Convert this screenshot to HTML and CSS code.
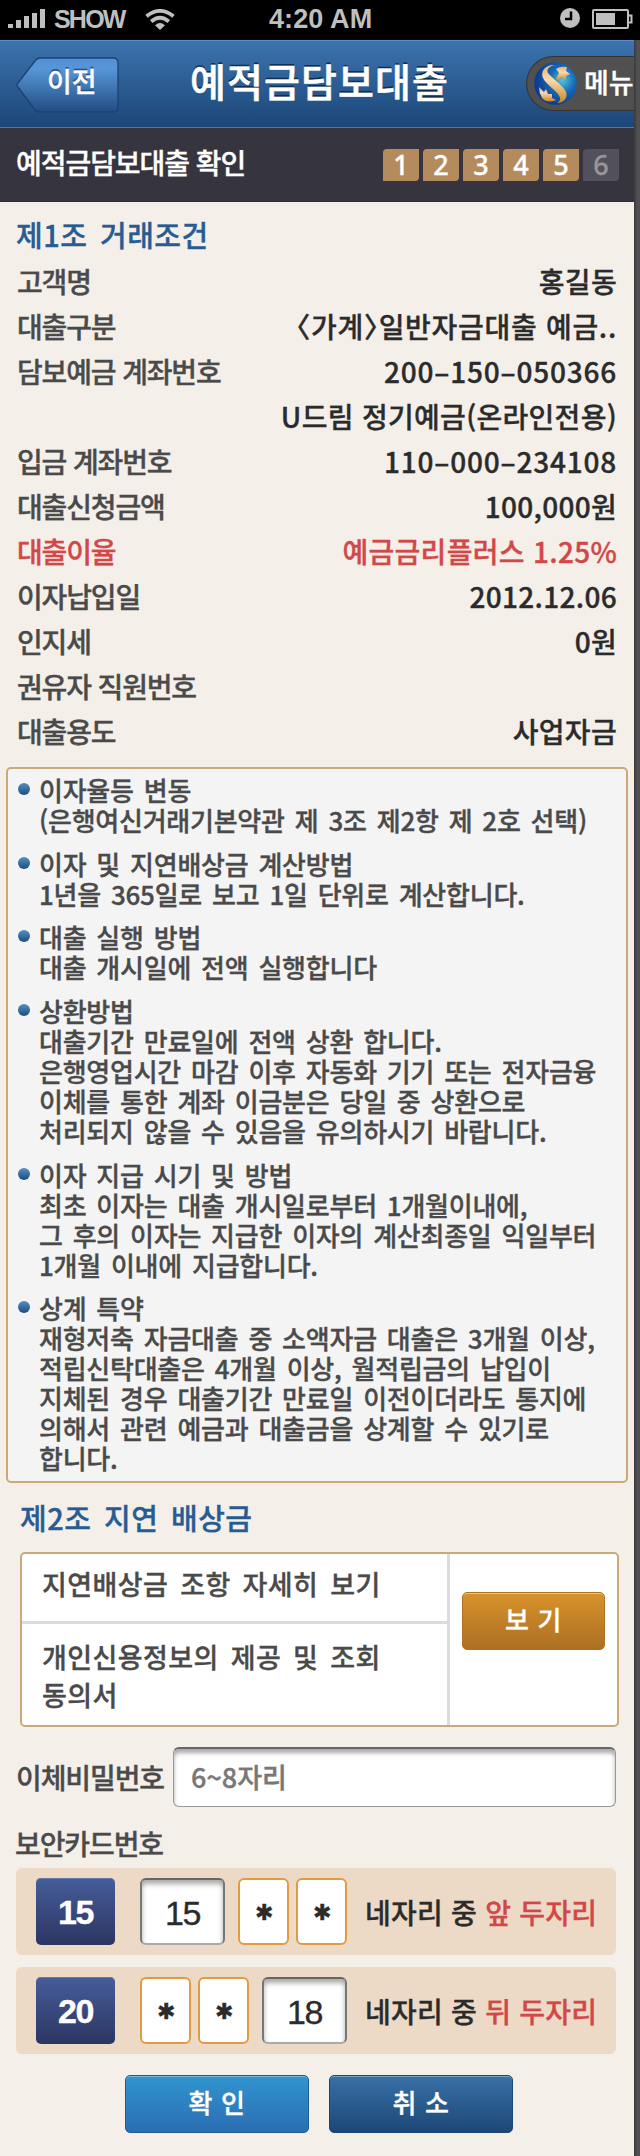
FILE: index.html
```html
<!DOCTYPE html>
<html lang="ko">
<head>
<meta charset="utf-8">
<title>예적금담보대출</title>
<link rel="stylesheet" href="styles.css">
</head>
<body>
<div class="status">
  <svg class="signal" width="38" height="20" viewBox="0 0 38 20"><path d="M0 15h5v4H0zM8 11h5v8H8zM16 7h5v12h-5zM24 4h5v15h-5zM32 0h5v19h-5z" fill="#bfbfbf"/></svg>
  <span class="carrier">SHOW</span>
  <svg class="wifi" width="30" height="21" viewBox="0 0 30 21"><g fill="none" stroke="#bfbfbf" stroke-width="3.8"><path d="M1.500 7.300Q15-3.500 28.500 7.300"/><path d="M6.200 12.500Q15 5 23.800 12.500"/></g><path d="M10 16.200Q15 12 20 16.200L15 21z" fill="#bfbfbf"/></svg>
  <span class="time">4:20 AM</span>
  <svg class="clock" width="20" height="20" viewBox="0 0 20 20"><circle cx="10" cy="10" r="10" fill="#bfbfbf"/><path d="M11 3.500v7.500H5" fill="none" stroke="#000" stroke-width="2.500"/></svg>
  <svg class="battery" width="41" height="20" viewBox="0 0 41 20"><rect x="1" y="1" width="35" height="18" rx="1" fill="none" stroke="#bfbfbf" stroke-width="2"/><path d="M4 4h19v12H4z" fill="#bfbfbf"/><path d="M37 6.500h2.500v7H37" fill="none" stroke="#bfbfbf" stroke-width="2"/></svg>
</div>
<div class="screen">
<div class="page">
  <header class="header">
    <a class="back">
      <svg class="back-shape" width="104" height="56" viewBox="0 0 104 56"><defs><linearGradient id="bg" x1="0" y1="0" x2="0" y2="1"><stop offset="0" stop-color="#5290d8"/><stop offset=".2" stop-color="#5796d6"/><stop offset=".65" stop-color="#386da8"/><stop offset="1" stop-color="#244b83"/></linearGradient></defs><path d="M24 1H97q5 0 5 5V50q0 5-5 5H24q-3 0-5-2L2 30q-2-2 0-4L19 4q2-3 5-3z" fill="url(#bg)" stroke="#1c4172" stroke-width="1.300"/></svg>
      <span class="back-text">이전</span>
    </a>
    <h1 class="title">예적금담보대출</h1>
    <a class="menu">
      <svg width="43" height="43" viewBox="0 0 43 43"><defs><radialGradient id="globe" cx=".66" cy=".42" r=".6"><stop offset="0" stop-color="#50c4de"/><stop offset=".5" stop-color="#1769b7"/><stop offset="1" stop-color="#0b3c94"/></radialGradient><linearGradient id="gold" x1="0" y1="0" x2="0" y2="1"><stop offset="0" stop-color="#efb366"/><stop offset=".4" stop-color="#f8d9b0"/><stop offset="1" stop-color="#cf8217"/></linearGradient></defs><circle cx="21.500" cy="21.500" r="21.300" fill="url(#globe)"/><g fill="url(#gold)"><path d="M21 3C12 2 6 9 9 16c3 6 10 10 15 16 3 4 3 7-1 9 8 0 12-7 8-13C27 22 19 17 14 11c-2-3 1-7 7-8z"/><path d="M22 7q4-3 11-2l-1 4 4 3-4 2 0 4-5-3-2 4-3-2 3-6z"/><path d="M5 25l5 5 2-3 2 5 4 0 0 4 4 2Q13 42 8 36 5 31 5 25z"/></g></svg>
      <span>메뉴</span>
    </a>
  </header>
  <div class="subbar">
    <span class="sub-title">예적금담보대출 확인</span>
    <div class="steps"><i>1</i><i>2</i><i>3</i><i>4</i><i>5</i><i class="off">6</i></div>
  </div>
  <h2 class="section first">제1조 거래조건</h2>
  <dl class="terms">
    <div><dt>고객명</dt><dd>홍길동</dd></div>
    <div><dt>대출구분</dt><dd class="kind">〈가계〉일반자금대출 예금..</dd></div>
    <div><dt>담보예금 계좌번호</dt><dd class="num">200–150–050366</dd></div>
    <div><dt></dt><dd>U드림 정기예금(온라인전용)</dd></div>
    <div><dt>입금 계좌번호</dt><dd class="num">110–000–234108</dd></div>
    <div><dt>대출신청금액</dt><dd>100,000원</dd></div>
    <div class="red"><dt>대출이율</dt><dd>예금금리플러스 1.25%</dd></div>
    <div><dt>이자납입일</dt><dd>2012.12.06</dd></div>
    <div><dt>인지세</dt><dd>0원</dd></div>
    <div><dt>권유자 직원번호</dt><dd></dd></div>
    <div><dt>대출용도</dt><dd>사업자금</dd></div>
  </dl>
  <ul class="notice">
    <li>이자율등 변동<br>(은행여신거래기본약관 제 3조 제2항 제 2호 선택)</li>
    <li>이자 및 지연배상금 계산방법<br>1년을 365일로 보고 1일 단위로 계산합니다.</li>
    <li>대출 실행 방법<br>대출 개시일에 전액 실행합니다</li>
    <li>상환방법<br>대출기간 만료일에 전액 상환 합니다.<br>은행영업시간 마감 이후 자동화 기기 또는 전자금융<br>이체를 통한 계좌 이금분은 당일 중 상환으로<br>처리되지 않을 수 있음을 유의하시기 바랍니다.</li>
    <li>이자 지급 시기 및 방법<br>최초 이자는 대출 개시일로부터 1개월이내에,<br>그 후의 이자는 지급한 이자의 계산최종일 익일부터<br>1개월 이내에 지급합니다.</li>
    <li>상계 특약<br>재형저축 자금대출 중 소액자금 대출은 3개월 이상,<br>적립신탁대출은 4개월 이상, 월적립금의 납입이<br>지체된 경우 대출기간 만료일 이전이더라도 통지에<br>의해서 관련 예금과 대출금을 상계할 수 있기로<br>합니다.</li>
  </ul>
  <h2 class="section second">제2조 지연 배상금</h2>
  <div class="consent">
    <div class="consent-list">
      <p>지연배상금 조항 자세히 보기</p>
      <p>개인신용정보의 제공 및 조회<br>동의서</p>
    </div>
    <div class="consent-action"><button class="btn view">보 기</button></div>
  </div>
  <div class="field">
    <span class="label">이체비밀번호</span>
    <div class="input">6~8자리</div>
  </div>
  <div class="label card-label">보안카드번호</div>
  <div class="card-row">
    <b class="badge">15</b>
    <div class="digits"><span class="entry lead">15</span><span class="star">✱</span><span class="star">✱</span></div>
    <p class="hint">네자리 중 <em>앞 두자리</em></p>
  </div>
  <div class="card-row">
    <b class="badge">20</b>
    <div class="digits"><span class="star">✱</span><span class="star">✱</span><span class="entry trail">18</span></div>
    <p class="hint">네자리 중 <em>뒤 두자리</em></p>
  </div>
  <div class="actions"><button class="btn ok">확 인</button><button class="btn cancel">취 소</button></div>
</div>
</div>
</body>
</html>
```

FILE: styles.css
```css
* { box-sizing: border-box; }
body { margin: 0; width: 640px; background: #4f4f52; color: #4a4a4a; font: 500 28px/1 "Noto Sans CJK KR", sans-serif; -webkit-text-stroke: .35px; }
h1, h2, p, dl, dd, ul { margin: 0; padding: 0; }

/* Phone status bar */
.status { display: flex; height: 40px; padding: 9px 7px 0 8px; background: #000; color: #bfbfbf; font: bold 25px/20px "Liberation Sans", sans-serif; -webkit-text-stroke: 0; }
.signal { flex: none; margin-right: 8px; }
.carrier { width: 73px; letter-spacing: -1.800px; }
.wifi { flex: none; margin-left: 18px; }
.time { margin-left: 94px; width: 200px; font-size: 27px; letter-spacing: .1px; white-space: nowrap; }
.clock { flex: none; margin: -1px 12px 0 auto; }
.battery { flex: none; }

.screen { width: 640px; height: 2116px; background: linear-gradient(90deg, #4f4f52 634px, #39393c 634px, #505053 637px); }
.page { width: 634px; height: 2116px; background: #f4efe9; }

/* Title bar */
.header { display: flex; align-items: flex-start; height: 88px; border-top: 1px solid #5c90cc; border-bottom: 1px solid #4a78b0; background: linear-gradient(#3b74ae, #1c4678); color: #fff; }
.back { display: grid; margin: 16px 0 0 16px; width: 104px; height: 56px; }
.back > * { grid-area: 1 / 1; }
.back-text { margin: 9px 0 0 31px; font-size: 27px; line-height: 30px; text-shadow: 0 -2px #24508a; }
.title { margin: 14px 0 0 70px; width: 272px; font-size: 39px; line-height: 50px; font-weight: 500; letter-spacing: 1.100px; text-shadow: 0 -2px #122f50; white-space: nowrap; -webkit-text-stroke: .6px; }
.menu { display: flex; align-items: center; margin: 15px 0 0 auto; width: 108px; height: 55px; padding-left: 7px; border: 1px solid #343434; border-right: 0; border-radius: 28px 0 0 28px; background: #505050; font-size: 27px; white-space: nowrap; }
.menu svg { flex: none; margin-right: 7px; }
.menu span { line-height: 30px; margin-top: -3px; }

.subbar { display: flex; justify-content: space-between; height: 74px; padding: 21px 15px 0 16px; background: #36353f; border-bottom: 1px solid #302e35; color: #fff; }
.sub-title { margin-top: -2px; font-size: 28px; line-height: 30px; letter-spacing: -1.050px; }
.steps { display: flex; gap: 4px; }
.steps i { width: 36px; height: 32px; border-radius: 4px 0; background: #b48b5d; font: 500 27px/32px "Noto Sans", sans-serif; text-align: center; }
.steps i.off { background: #52515b; color: #96969a; }

.section { color: #275c92; font-size: 29px; font-weight: 500; line-height: 40px; letter-spacing: .5px; word-spacing: 4px; white-space: nowrap; }
.first { margin: 12px 0 5px 16px; }
.second { margin: 14px 0 15px 20px; }

/* Loan terms */
.terms > div { display: flex; justify-content: space-between; height: 45px; padding: 0 17px; line-height: 45px; white-space: nowrap; }
.terms dt { letter-spacing: -1.150px; }
.terms dd { color: #2b2b2b; letter-spacing: .3px; }
.terms .kind { font-feature-settings: "halt"; letter-spacing: .7px; }
.terms .num { letter-spacing: .8px; }
.terms .red dt, .terms .red dd { color: #d14848; }

.notice { list-style: none; margin: 13px 0 0 6px; width: 622px; height: 716px; padding: 6px 0 0 31px; border: 2px solid #cda97a; border-radius: 5px; background: #f4f4f4; font-size: 26px; line-height: 30px; letter-spacing: -.25px; word-spacing: 3px; white-space: nowrap; }
.notice li { position: relative; margin-bottom: 13.700px; }
.notice li::before { content: ""; position: absolute; left: -21px; top: 8px; width: 12px; height: 12px; border-radius: 50%; background: linear-gradient(#568fbe, #1c4e80); }

.consent { display: flex; margin-left: 20px; width: 599px; height: 175px; border: 2px solid #cda97a; border-radius: 5px; background: #fff; font-size: 27px; letter-spacing: .4px; word-spacing: 4px; line-height: 38px; }
.consent-list { width: 428px; border-right: 3px solid #dcdcdc; white-space: nowrap; }
.consent-list p { padding-left: 20px; }
.consent-list p:first-child { height: 70px; padding-top: 11px; border-bottom: 3px solid #dcdcdc; }
.consent-list p:last-child { padding-top: 14px; }
.consent-action { padding: 38px 0 0 12px; }
.btn { display: block; height: 58px; padding: 0 0 4px; border: 1px solid; border-radius: 5px; color: #fff; font: 500 26px/50px "Noto Sans CJK KR", sans-serif; letter-spacing: .6px; }
.view { width: 143px; border-color: #ad7223; background: linear-gradient(#d7932b, #ad6f23); box-shadow: inset 0 1px #efc180; }

.field { display: flex; align-items: center; margin-top: 20px; height: 60px; padding-left: 16px; }
.label { letter-spacing: -1.100px; line-height: 40px; white-space: nowrap; }
.field .label { width: 157px; }
.input { width: 443px; height: 60px; padding: 0 17px; border: 1px solid #999; border-top: 2px solid #666; border-radius: 6px; background: #fff; box-shadow: inset 0 4px 4px #aaa; color: #777; font-size: 27px; line-height: 56px; white-space: nowrap; }
.card-label { margin: 16px 0 5px 15px; }

/* Security card */
.card-row { display: flex; align-items: center; margin: 0 0 12px 16px; width: 600px; height: 87px; padding-left: 20px; border-radius: 6px; background: #ecdac6; }
.badge { width: 79px; height: 67px; border-radius: 5px; background: linear-gradient(#465d9a, #2c3561); box-shadow: inset 0 1px #6478ac; color: #fff; font: bold 34px/68px "Liberation Sans", sans-serif; letter-spacing: -1.500px; text-align: center; }
.digits { display: flex; gap: 7px; width: 207px; margin-left: 25px; }
.digits span { height: 67px; border-radius: 6px; background: #fff; color: #2b2b2b; text-align: center; }
.digits .entry { width: 85px; border: 2px solid #777; border-top-color: #666; border-bottom-color: #aaa; box-shadow: inset 0 4px 5px #aaa; font: 400 34px/66px "Liberation Sans", sans-serif; letter-spacing: -1.500px; }
.lead { margin-right: 6px; }
.trail { margin-left: 6px; }
.star { width: 51px; border: 2px solid #e19c43; font-size: 22px; line-height: 60px; }
.hint { margin-left: 18px; color: #2b2b2b; letter-spacing: .25px; white-space: nowrap; }
.hint em { color: #d14848; font-style: normal; }

.actions { display: flex; gap: 20px; margin: 21px 0 0 125px; }
.actions .btn { width: 184px; }
.ok { border-color: #205a93; background: linear-gradient(#3095ce, #2b6db3); box-shadow: inset 0 1px #76b6e0; }
.cancel { border-color: #1e4672; background: linear-gradient(#3870a6, #1d4776); box-shadow: inset 0 1px #7b9fc5; }
```
